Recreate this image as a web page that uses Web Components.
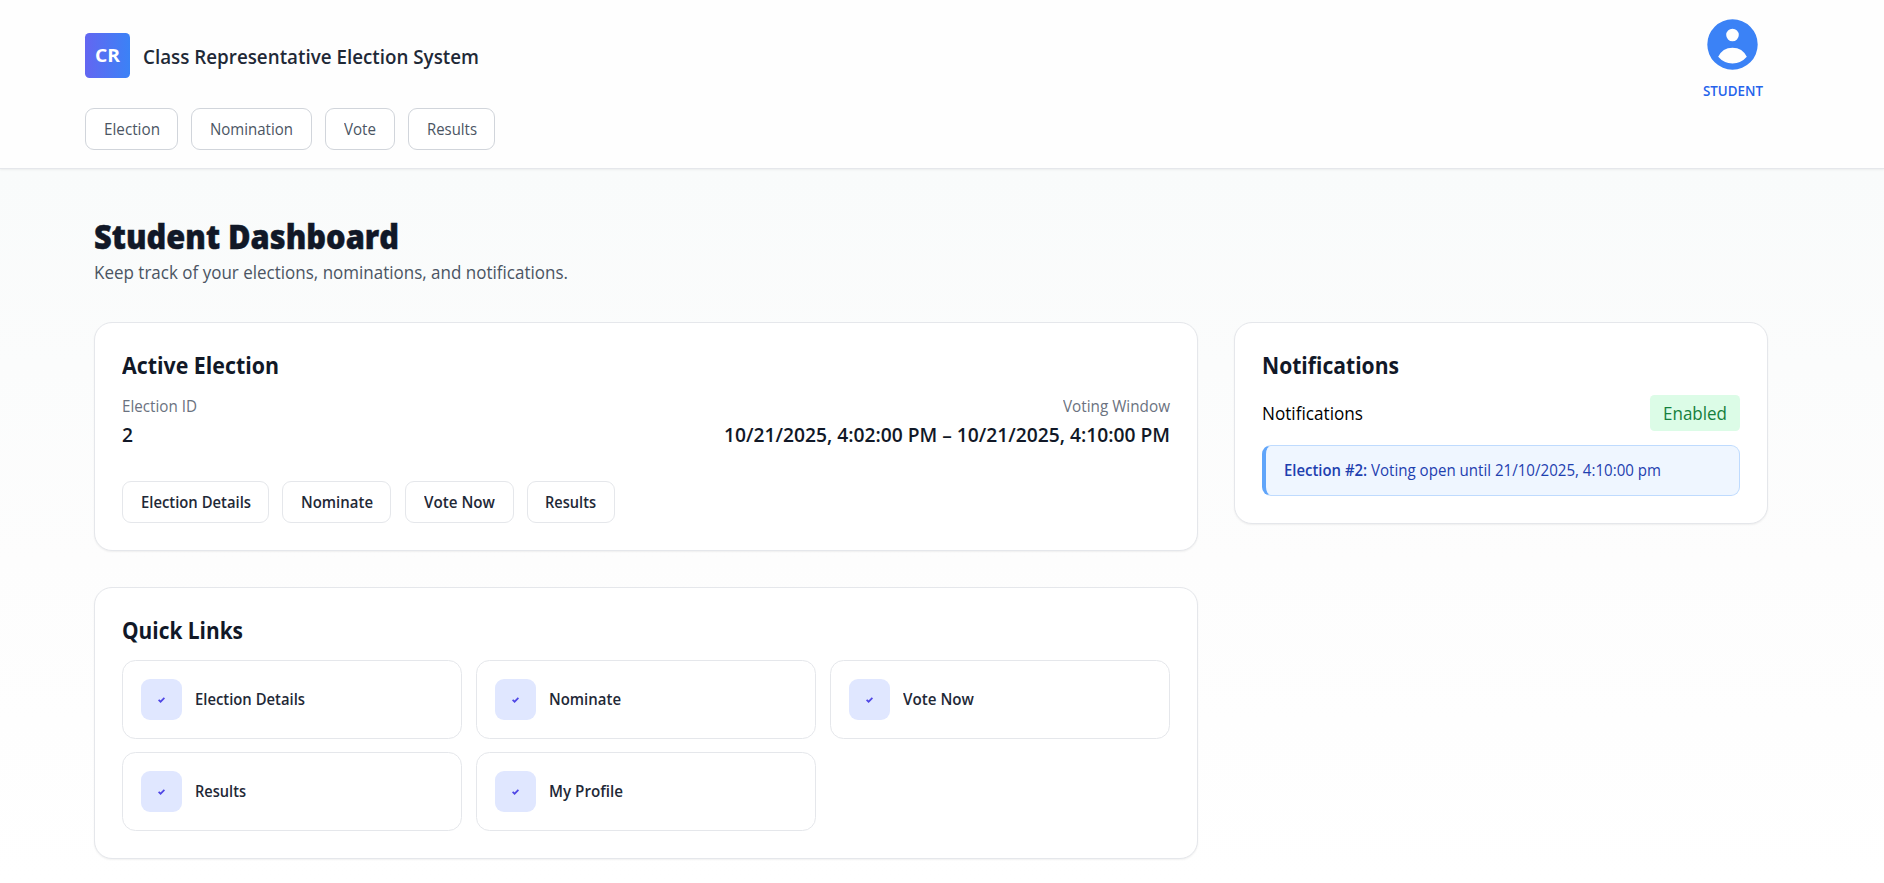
<!DOCTYPE html>
<html lang="en"><head><meta charset="utf-8"><title>Student Dashboard</title>
<style>
html{font-size:18px}
body{margin:0;min-height:883px;font-family:"Open Sans","Noto Sans",sans-serif;color:#000;background:#fff}
</style></head><body><election-app></election-app>
<script>
const define=(name,html,init)=>{
  const t=document.createElement('template');t.innerHTML=html;
  customElements.define(name,class extends HTMLElement{
    connectedCallback(){
      if(this.shadowRoot)return;
      this.attachShadow({mode:'open'}).append(t.content.cloneNode(true));
      if(init)init(this,this.shadowRoot);
    }
  });
};
// One line of text condensed to a given advance width.
define('text-line',`<style>:host{display:block;white-space:nowrap;flex:none}span{display:inline-block;transform-origin:0 50%}</style><span><slot></slot></span>`,(h,r)=>{
  const w=+h.getAttribute('w');if(!w)return;
  h.style.width=w+'px';
  const s=r.querySelector('span');
  s.style.transform='scaleX('+w/s.getBoundingClientRect().width+')';
});
define('brand-mark',`<style>:host{display:flex;align-items:center;justify-content:center;width:45px;height:45px;border-radius:4.5px;background:linear-gradient(90deg,#6366f1,#3b82f6);color:#fff;font-weight:700;font-size:18px;line-height:27px}</style><text-line w="25"><slot></slot></text-line>`);
define('pill-button',`<style>:host{display:flex;align-items:center;justify-content:center;box-sizing:border-box;height:42px;border:1px solid var(--line,#e5e7eb);border-radius:9px;background:#fff;font-size:15.75px;line-height:22.5px;color:var(--ink,#1f2937);font-weight:var(--weight,600)}</style><slot></slot>`,h=>h.style.width=h.getAttribute('width')+'px');
define('user-badge',`<style>:host{display:flex;flex-direction:column;align-items:center;width:64px;color:#2563eb;font-size:13.5px;line-height:18px;font-weight:600}svg{width:63px;height:63px;fill:#3b82f6;display:block;margin-bottom:6px}</style>
<svg viewBox="0 0 20 20"><path fill-rule="evenodd" clip-rule="evenodd" d="M18 10a8 8 0 11-16 0 8 8 0 0116 0zm-6-3a2 2 0 11-4 0 2 2 0 014 0zm-2 4a5 5 0 00-4.546 2.916A5.986 5.986 0 0010 16a5.986 5.986 0 004.546-2.084A5 5 0 0010 11z"/></svg><slot></slot>`);
define('app-header',`<style>:host{display:flex;justify-content:space-between;box-sizing:border-box;height:169px;padding:33px 119.5px 0 85px;background:#fefefe;border-bottom:1px solid #e5e7eb;box-shadow:0 1px 2px rgba(0,0,0,.06);position:relative}
.brand{display:flex;align-items:center;gap:13px;font-size:20.25px;line-height:30px;font-weight:600;color:#1f2937}
nav{display:flex;gap:13px;margin-top:30px;--line:#d1d5db;--ink:#4b5563;--weight:400}user-badge{margin-top:-20.5px}</style>
<div><div class="brand"><brand-mark>CR</brand-mark><text-line w="336">Class Representative Election System</text-line></div>
<nav><pill-button width="93"><text-line w="56">Election</text-line></pill-button><pill-button width="121"><text-line w="83">Nomination</text-line></pill-button><pill-button width="70"><text-line w="32">Vote</text-line></pill-button><pill-button width="87"><text-line w="50">Results</text-line></pill-button></nav></div>
<user-badge><text-line w="60">STUDENT</text-line></user-badge>`);
define('info-card',`<style>:host{display:block;box-sizing:border-box;padding:27px;border:1px solid #e5e7eb;border-radius:18px;background:#fff;box-shadow:0 1px 2px rgba(0,0,0,.06)}
.title{font-size:22.5px;line-height:31px;font-weight:700;color:#111827}</style><div class="title"><slot name="title"></slot></div><slot></slot>`);
define('quick-link',`<style>:host{display:flex;align-items:center;gap:13px;box-sizing:border-box;height:79px;padding:0 18px;border:1px solid #e5e7eb;border-radius:13.5px;background:#fff;font-size:15.75px;line-height:22.5px;font-weight:600;color:#1f2937}
i{display:flex;align-items:center;justify-content:center;width:41px;height:41px;border-radius:9px;background:#e0e7ff}svg{width:7px;height:6px;margin-right:1px}</style>
<i><svg viewBox="0 0 7 6" fill="none" stroke="#4f46e5" stroke-width="1.7"><path d="M.6 2.8 2.6 4.7 6.4.9"/></svg></i><slot></slot>`);
define('election-alert',`<style>:host{display:flex;align-items:center;box-sizing:border-box;height:51px;padding-left:18px;border:1px solid #bfdbfe;border-left:4px solid #60a5fa;border-radius:9px;background:#eff6ff;color:#1e40af;font-size:15.75px;line-height:22.5px}b{font-weight:600}</style><b><slot name="subject"></slot></b><slot></slot>`);
define('election-app',`<style>:host{display:block;min-height:883px;background:#fff}
main{box-sizing:border-box;height:714px;padding:47px 116px 0 94px;background:linear-gradient(#f9fbfb,#fdfdfd 55%,#fff)}
.h1{font-size:33.75px;line-height:40px;font-weight:800;color:#111827;-webkit-text-stroke:.5px #111827}
.sub{font-size:18px;line-height:27px;color:#4b5563;margin:3px 0 36px}
.grid{display:grid;grid-template-columns:1104px 534px;gap:36px;align-items:start}
.col{display:grid;gap:36px}
.row{display:flex;justify-content:space-between}
.r{display:flex;flex-direction:column;align-items:flex-end}
.lab{font-size:15.75px;line-height:22px;color:#6b7280}.val{font-size:20.25px;line-height:32px;margin-top:1px;font-weight:600;color:#111827}
.active{height:229px}.links{height:272px}.note{height:202px}
.acts{display:flex;gap:13.3px;margin-top:31px}
.tiles{display:grid;grid-template-columns:repeat(3,1fr);gap:13px 14px;margin-top:14px}
.toggle{display:flex;justify-content:space-between;align-items:center;height:36px;margin:14px 0;font-size:18px;line-height:27px}
.on{display:flex;align-items:center;justify-content:center;width:90px;height:36px;border-radius:4.5px;background:#dcfce7;color:#15803d}</style>
<app-header></app-header>
<main><text-line class="h1" w="305">Student Dashboard</text-line><text-line class="sub" w="474">Keep track of your elections, nominations, and notifications.</text-line>
<div class="grid"><div class="col">
<info-card class="active"><text-line slot="title" w="157">Active Election</text-line>
<div class="row" style="margin-top:14px"><div><text-line class="lab" w="75">Election ID</text-line><text-line class="val" w="11">2</text-line></div>
<div class="r"><text-line class="lab" w="107">Voting Window</text-line><text-line class="val" w="446">10/21/2025, 4:02:00 PM – 10/21/2025, 4:10:00 PM</text-line></div></div>
<div class="acts"><pill-button width="147"><text-line w="110">Election Details</text-line></pill-button><pill-button width="109"><text-line w="72">Nominate</text-line></pill-button><pill-button width="109"><text-line w="71">Vote Now</text-line></pill-button><pill-button width="88"><text-line w="51">Results</text-line></pill-button></div></info-card>
<info-card class="links"><text-line slot="title" w="121">Quick Links</text-line><div class="tiles">
<quick-link><text-line w="110">Election Details</text-line></quick-link><quick-link><text-line w="72">Nominate</text-line></quick-link><quick-link><text-line w="71">Vote Now</text-line></quick-link><quick-link><text-line w="51">Results</text-line></quick-link><quick-link><text-line w="74">My Profile</text-line></quick-link></div></info-card></div>
<info-card class="note"><text-line slot="title" w="137">Notifications</text-line><div class="toggle"><text-line w="101">Notifications</text-line><div class="on"><text-line w="64">Enabled</text-line></div></div>
<election-alert><text-line slot="subject" w="87">Election #2:&nbsp;</text-line><text-line w="290">Voting open until 21/10/2025, 4:10:00 pm</text-line></election-alert></info-card>
</div></main>`);
</script></body></html>
